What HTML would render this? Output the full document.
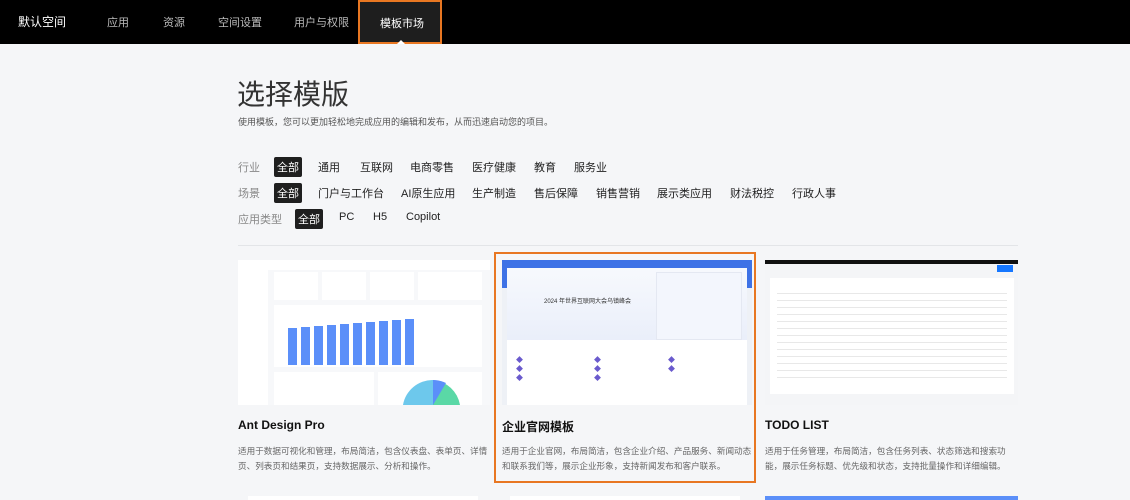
<!DOCTYPE html>
<html><head><meta charset="utf-8"><style>
*{margin:0;padding:0;box-sizing:border-box}
body{width:1130px;height:500px;overflow:hidden;background:#f5f6f8;font-family:"Liberation Sans","Noto Sans CJK SC",sans-serif;position:relative;color:#1f1f1f}
.nav{position:absolute;left:0;top:0;width:1130px;height:44px;background:#000}
.nav span{position:absolute;top:14px;font-size:11px;color:#bbb;white-space:nowrap}
.tab{position:absolute;left:358px;top:0;width:84px;height:44px;border:2px solid #e87722;background:#1e1e1e}
.tab b{position:absolute;left:20px;top:13px;font-size:11px;color:#fff;font-weight:normal;white-space:nowrap}
.tab i{position:absolute;left:37px;top:34px;border:4px solid transparent;border-bottom-color:#fff}
h1{position:absolute;left:237px;top:73px;font-size:28px;font-weight:normal;color:#333;white-space:nowrap}
.sub{position:absolute;left:238px;top:115px;font-size:9px;color:#555;white-space:nowrap}
.row{position:absolute;left:238px;font-size:11px;color:#222;height:18px;width:800px}
.row span{position:absolute;top:2px;white-space:nowrap}
.row .l{color:#888}
.row .on{background:#1f1f1f;color:#fff;padding:2px 3px;top:0;border-radius:2px}
.hr{position:absolute;left:238px;top:245px;width:780px;height:1px;background:#e3e5e8}
.th{position:absolute;background:#fff;overflow:hidden}
.t{position:absolute;font-size:12px;font-weight:bold;color:#111;white-space:nowrap}
.d{position:absolute;font-size:8.6px;color:#666;line-height:15px;white-space:nowrap}
</style></head><body>
<div class="nav">
<span style="left:18px;font-size:12px;color:#fff;top:13px">默认空间</span>
<span style="left:107px">应用</span><span style="left:163px">资源</span><span style="left:218px">空间设置</span><span style="left:294px">用户与权限</span>
</div>
<div class="tab"><b>模板市场</b><i></i></div>
<h1>选择模版</h1>
<div class="sub">使用模板，您可以更加轻松地完成应用的编辑和发布，从而迅速启动您的项目。</div>
<div class="row" style="top:157px"><span class="l" style="left:0">行业</span><span class="on" style="left:36px">全部</span><span style="left:80px">通用</span><span style="left:122px">互联网</span><span style="left:172px">电商零售</span><span style="left:234px">医疗健康</span><span style="left:296px">教育</span><span style="left:336px">服务业</span></div>
<div class="row" style="top:183px"><span class="l" style="left:0">场景</span><span class="on" style="left:36px">全部</span><span style="left:80px">门户与工作台</span><span style="left:163px">AI原生应用</span><span style="left:234px">生产制造</span><span style="left:296px">售后保障</span><span style="left:358px">销售营销</span><span style="left:419px">展示类应用</span><span style="left:492px">财法税控</span><span style="left:554px">行政人事</span></div>
<div class="row" style="top:209px"><span class="l" style="left:0">应用类型</span><span class="on" style="left:57px">全部</span><span style="left:101px">PC</span><span style="left:135px">H5</span><span style="left:168px">Copilot</span></div>
<div class="hr"></div>

<div class="th" style="left:238px;top:260px;width:252px;height:145px;background:#f7f8fa">
 <div style="position:absolute;left:0;top:0;width:252px;height:10px;background:#fff"></div>
 <div style="position:absolute;left:0;top:10px;width:30px;height:135px;background:#fff"></div>
 <div style="position:absolute;left:36px;top:12px;width:44px;height:28px;background:#fff"></div>
 <div style="position:absolute;left:84px;top:12px;width:44px;height:28px;background:#fff"></div>
 <div style="position:absolute;left:132px;top:12px;width:44px;height:28px;background:#fff"></div>
 <div style="position:absolute;left:180px;top:12px;width:64px;height:28px;background:#fff"></div>
 <div style="position:absolute;left:36px;top:45px;width:208px;height:62px;background:#fff"></div>
 <svg style="position:absolute;left:50px;top:55px" width="140" height="50"><g fill="#5b8ff9"><rect x="0" y="13" width="9" height="37"/><rect x="13" y="12" width="9" height="38"/><rect x="26" y="11" width="9" height="39"/><rect x="39" y="10" width="9" height="40"/><rect x="52" y="9" width="9" height="41"/><rect x="65" y="8" width="9" height="42"/><rect x="78" y="7" width="9" height="43"/><rect x="91" y="6" width="9" height="44"/><rect x="104" y="5" width="9" height="45"/><rect x="117" y="4" width="9" height="46"/></g></svg>
 <div style="position:absolute;left:36px;top:112px;width:100px;height:33px;background:#fff"></div>
 <div style="position:absolute;left:140px;top:112px;width:104px;height:33px;background:#fff"></div>
 <svg style="position:absolute;left:160px;top:120px" width="70" height="25"><path d="M35 25 L35 0 A30 30 0 0 1 62 25Z" fill="#5ad8a6"/><path d="M35 25 L5 25 A30 30 0 0 1 35 0Z" fill="#6dc8ec"/><path d="M35 25 L35 0 A30 30 0 0 1 48 3Z" fill="#5b8ff9"/></svg>
</div>
<div class="t" style="left:238px;top:418px">Ant Design Pro</div>
<div class="d" style="left:238px;top:444px">适用于数据可视化和管理，布局简洁，包含仪表盘、表单页、详情<br>页、列表页和结果页，支持数据展示、分析和操作。</div>

<div style="position:absolute;left:494px;top:252px;width:262px;height:231px;border:2px solid #e87722"></div>
<div class="th" style="left:502px;top:260px;width:250px;height:145px;background:#eef1f6">
 <div style="position:absolute;left:0;top:0;width:250px;height:28px;background:#3e72e6"></div>
 <div style="position:absolute;left:5px;top:8px;width:240px;height:76px;background:linear-gradient(#f7f9fd,#e9eefa)"></div>
 <div style="position:absolute;left:154px;top:12px;width:86px;height:68px;background:#f3f6fd;border:1px solid #e4e8f2"></div>
 <div style="position:absolute;left:42px;top:36px;font-size:6px;color:#333;white-space:nowrap">2024 年世界互联网大会乌镇峰会</div>
 <div style="position:absolute;left:5px;top:80px;width:240px;height:65px;background:#fff"></div>
 <div style="position:absolute;left:14px;top:96px;color:#6a5acd;font-size:7px;line-height:9px">◆<br>◆<br>◆</div>
 <div style="position:absolute;left:92px;top:96px;color:#6a5acd;font-size:7px;line-height:9px">◆<br>◆<br>◆</div>
 <div style="position:absolute;left:166px;top:96px;color:#6a5acd;font-size:7px;line-height:9px">◆<br>◆</div>
</div>
<div class="t" style="left:502px;top:418px">企业官网模板</div>
<div class="d" style="left:502px;top:444px">适用于企业官网，布局简洁，包含企业介绍、产品服务、新闻动态<br>和联系我们等，展示企业形象，支持新闻发布和客户联系。</div>

<div class="th" style="left:765px;top:260px;width:253px;height:145px;background:#f4f5f7">
 <div style="position:absolute;left:0;top:0;width:253px;height:4px;background:#111"></div>
 <div style="position:absolute;left:232px;top:5px;width:16px;height:7px;background:#1677ff"></div>
 <div style="position:absolute;left:5px;top:18px;width:244px;height:116px;background:#fff"></div>
 <div style="position:absolute;left:12px;top:27px;width:230px;height:92px;background:repeating-linear-gradient(#fff 0 6px,#e8e8e8 6px 7px)"></div>
</div>
<div class="t" style="left:765px;top:418px">TODO LIST</div>
<div class="d" style="left:765px;top:444px">适用于任务管理，布局简洁，包含任务列表、状态筛选和搜索功<br>能，展示任务标题、优先级和状态，支持批量操作和详细编辑。</div>
<div style="position:absolute;left:765px;top:496px;width:253px;height:4px;background:#5b8ff9"></div>
<div style="position:absolute;left:248px;top:496px;width:230px;height:4px;background:#fff"></div>
<div style="position:absolute;left:510px;top:496px;width:230px;height:4px;background:#fff"></div>
</body></html>
